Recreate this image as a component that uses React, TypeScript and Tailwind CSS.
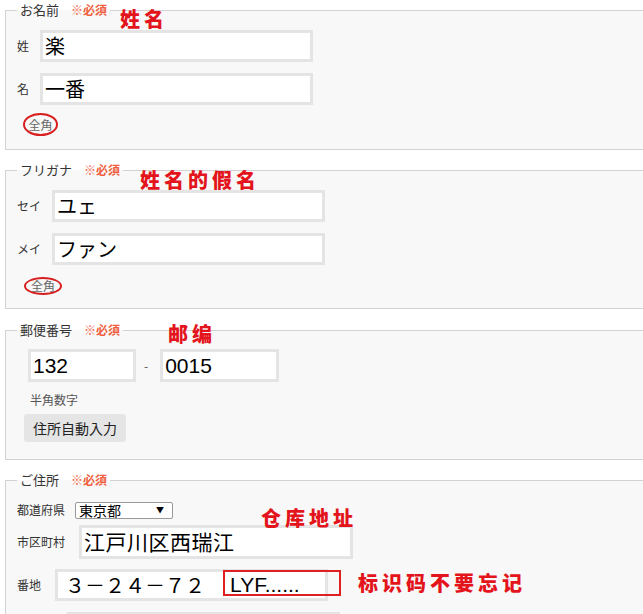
import React from "react";

const Required = () => (
  <span className="ml-[12px] text-[12px] font-bold text-[#f0603f]">※必須</span>
);

const Legend = ({ title }: { title: string }) => (
  <legend className="px-[3px] text-[13px] leading-[14px] text-[#333]">
    {title}
    <Required />
  </legend>
);

const TextBox = ({ width, value, className = "" }: { width: string; value: string; className?: string }) => (
  <div className={`flex h-[32px] items-center border-[3px] border-[#e4e4e4] bg-white pl-[2px] text-[20px] text-black ${width} ${className}`}>
    {value}
  </div>
);

const Zenkaku = ({ size }: { size: string }) => (
  <span className={`flex items-center justify-center rounded-[50%] border-2 border-[#d81e1e] text-[12px] leading-none text-[#666] ${size}`}>
    全角
  </span>
);

const Note = ({ text, className }: { text: string; className: string }) => (
  <span
    className={`absolute font-['Noto_Sans_CJK_SC',sans-serif] text-[20px] leading-none font-black tracking-[4px] text-[#e3141b] ${className}`}
  >
    {text}
  </span>
);

const App = () => {
  return (
    <div className="relative h-[614px] w-[643px] overflow-hidden bg-white font-['Noto_Sans_CJK_JP',sans-serif] text-[#333]">
      <div className="pt-[3px]">
        {/* お名前 */}
        <fieldset className="ml-[5px] -mr-[10px] border border-[#d2d2d2] bg-[#f8f8f8] pl-[11px] pb-[13px]">
          <Legend title="お名前" />
          <div className="mt-[13px] flex items-center gap-[11px]">
            <span className="text-[12px]">姓</span>
            <TextBox width="w-[273px]" value="楽" />
          </div>
          <div className="mt-[11px] flex items-center gap-[11px]">
            <span className="text-[12px]">名</span>
            <TextBox width="w-[273px]" value="一番" />
          </div>
          <div className="mt-[8px] ml-[6px] flex">
            <Zenkaku size="h-[23px] w-[35px]" />
          </div>
        </fieldset>

        {/* フリガナ */}
        <fieldset className="mt-[13px] ml-[5px] -mr-[10px] border border-[#d2d2d2] bg-[#f8f8f8] pl-[11px] pb-[13px]">
          <Legend title="フリガナ" />
          <div className="mt-[13px] flex items-center gap-[11px]">
            <span className="text-[12px]">セイ</span>
            <TextBox width="w-[273px]" value="ユェ" />
          </div>
          <div className="mt-[11px] flex items-center gap-[11px]">
            <span className="text-[12px]">メイ</span>
            <TextBox width="w-[273px]" value="ファン" />
          </div>
          <div className="mt-[12px] ml-[7px] flex">
            <Zenkaku size="h-[18px] w-[38px]" />
          </div>
        </fieldset>

        {/* 郵便番号 */}
        <fieldset className="mt-[14px] ml-[5px] -mr-[10px] border border-[#d2d2d2] bg-[#f8f8f8] pl-[11px] pb-[17px]">
          <Legend title="郵便番号" />
          <div className="mt-[12px] ml-[11px] flex items-center">
            <div className="flex h-[33px] w-[108px] items-center border-[3px] border-[#e4e4e4] bg-white pl-[2px] font-['Liberation_Sans',sans-serif] text-[21px] text-black">
              132
            </div>
            <span className="mx-[8px] text-[12px] text-[#555]">-</span>
            <div className="ml-[4px] flex h-[33px] w-[119px] items-center border-[3px] border-[#e4e4e4] bg-white pl-[2px] font-['Liberation_Sans',sans-serif] text-[21px] text-black">
              0015
            </div>
          </div>
          <div className="mt-[10px] ml-[13px] text-[12px] leading-[16px] text-[#555]">半角数字</div>
          <button className="mt-[6px] ml-[7px] h-[28px] w-[102px] rounded-[3px] bg-[#e5e5e5] text-[14px] text-[#222]">
            住所自動入力
          </button>
        </fieldset>

        {/* ご住所 */}
        <fieldset className="mt-[13px] ml-[5px] -mr-[10px] border border-[#d2d2d2] bg-[#f8f8f8] pl-[11px] pb-[12px]">
          <Legend title="ご住所" />
          <div className="mt-[14px] flex items-center gap-[10px]">
            <span className="text-[12px]">都道府県</span>
            <div className="flex h-[17px] w-[98px] items-center justify-between rounded-[2px] border border-[#999] bg-white pl-[3px] pr-[8px] text-[14px] leading-none text-black">
              <span>東京都</span>
              <span className="text-[8px]">▼</span>
            </div>
          </div>
          <div className="mt-[6px] flex items-center gap-[14px]">
            <span className="text-[12px]">市区町村</span>
            <div className="flex h-[34px] w-[274px] items-center border-[3px] border-[#e4e4e4] bg-white pl-[2px] text-[21px] tracking-[0.5px] text-black">
              江戸川区西瑞江
            </div>
          </div>
          <div className="mt-[10px] flex items-center gap-[14px]">
            <span className="text-[12px]">番地</span>
            <div className="relative flex h-[32px] w-[273px] items-center border-[3px] border-[#e4e4e4] bg-white pl-[7px] text-[20px] text-black">
              <span>３－２４－７２</span>
              <span className="ml-[25px] font-['Liberation_Sans',sans-serif] text-[21px]">LYF......</span>
              <span className="absolute top-[-2px] left-[165px] h-[26px] w-[118px] border-2 border-[#e02020]" />
            </div>
          </div>
          <div className="mt-[11px] ml-[50px] h-[32px] w-[273px] border-[3px] border-[#e4e4e4] bg-white" />
        </fieldset>
      </div>

      <Note text="姓名" className="left-[120px] top-[9px]" />
      <Note text="姓名的假名" className="left-[140px] top-[170px]" />
      <Note text="邮编" className="left-[168px] top-[324px]" />
      <Note text="仓库地址" className="left-[261px] top-[508px]" />
      <Note text="标识码不要忘记" className="left-[358px] top-[573px]" />
    </div>
  );
};

export default App;
